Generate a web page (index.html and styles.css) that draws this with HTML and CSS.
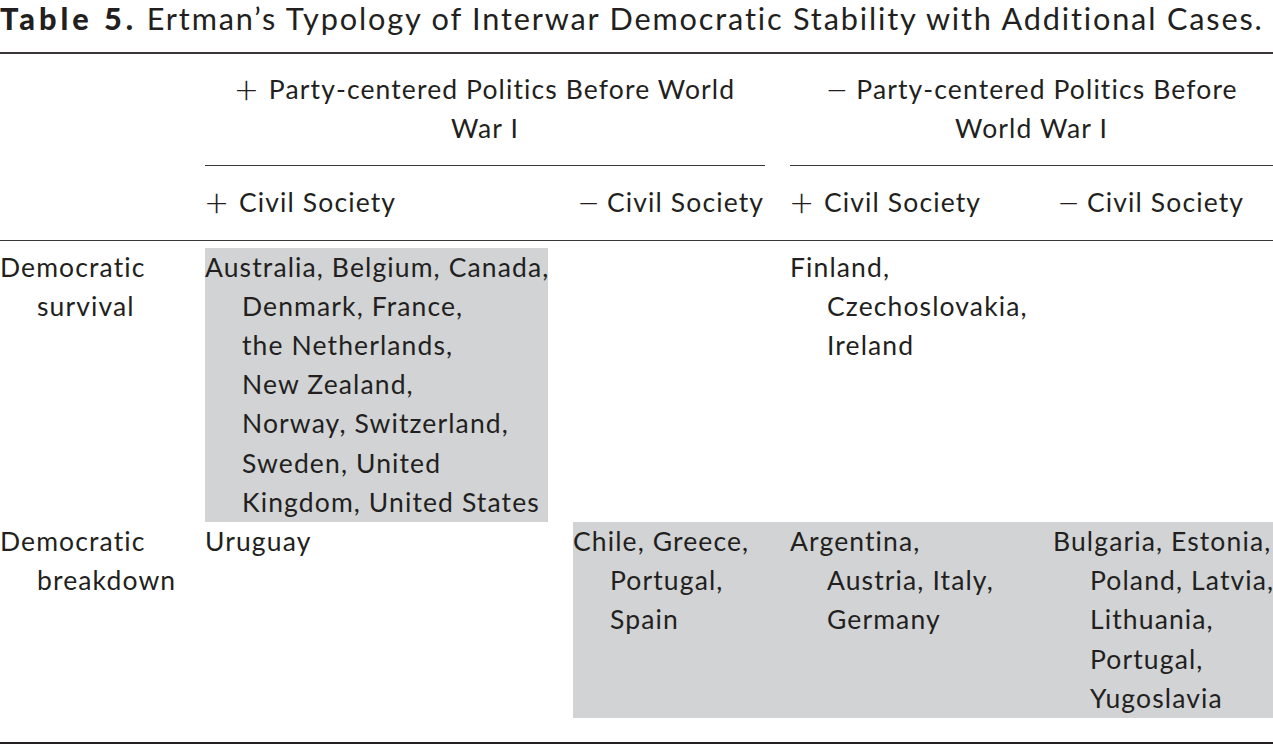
FILE: index.html
```html
<!DOCTYPE html>
<html lang="en">
<head>
<meta charset="utf-8">
<title>Table 5</title>
<link rel="stylesheet" href="styles.css">
</head>
<body>
<div class="page">
  <h1 class="caption"><b>Table 5.</b> Ertman’s Typology of Interwar Democratic Stability with Additional Cases.</h1>
  <div class="rule rule-top"></div>
  <div class="grid head">
    <div class="cell"></div>
    <div class="cell group group-left"><span class="sign">+</span>Party-centered Politics Before World<br>War I</div>
    <div class="cell group group-right"><span class="sign sign-minus">−</span>Party-centered Politics Before<br>World War I</div>
    <div class="cell sub"></div>
    <div class="cell sub"><span class="sign">+</span>Civil Society</div>
    <div class="cell sub"><span class="sign sign-minus sign-inset">−</span>Civil Society</div>
    <div class="cell sub"><span class="sign">+</span>Civil Society</div>
    <div class="cell sub"><span class="sign sign-minus sign-inset">−</span>Civil Society</div>
  </div>
  <div class="rule rule-mid"></div>
  <div class="grid body">
    <div class="cell"><p class="entry">Democratic<br>survival</p></div>
    <div class="cell shade shade-gap"><p class="entry">Australia, Belgium, Canada,<br>Denmark, France,<br>the Netherlands,<br>New Zealand,<br>Norway, Switzerland,<br>Sweden, United<br>Kingdom, United States</p></div>
    <div class="cell"></div>
    <div class="cell"><p class="entry">Finland,<br>Czechoslovakia,<br>Ireland</p></div>
    <div class="cell"></div>

    <div class="cell"><p class="entry">Democratic<br>breakdown</p></div>
    <div class="cell"><p class="entry">Uruguay</p></div>
    <div class="cell shade"><p class="entry">Chile, Greece,<br>Portugal,<br>Spain</p></div>
    <div class="cell shade"><p class="entry">Argentina,<br>Austria, Italy,<br>Germany</p></div>
    <div class="cell shade"><p class="entry">Bulgaria, Estonia,<br>Poland, Latvia,<br>Lithuania,<br>Portugal,<br>Yugoslavia</p></div>
  </div>
  <div class="rule rule-bottom"></div>
</div>
</body>
</html>
```

FILE: styles.css
```css
html, body {
  margin: 0;
  padding: 0;
  background: #ffffff;
}

body {
  font-family: Lato, "Open Sans", "Noto Sans", sans-serif;
  color: #231f20;
}

.page {
  width: 1273px;
}

.caption {
  margin: 0;
  font-size: 30.7px;
  line-height: 37px;
  font-weight: 400;
  letter-spacing: 1.82px;
  white-space: nowrap;
}

.caption b {
  font-weight: 900;
  letter-spacing: 4px;
}

.rule {
  background: #3a3637;
}

.rule-top {
  height: 1.5px;
  margin-top: 15px;
}

.rule-mid {
  height: 1.5px;
}

.rule-bottom {
  height: 2px;
  margin-top: 24px;
  background: #231f20;
}

.grid {
  display: grid;
  grid-template-columns: 205px 368px 217px 263px 220px;
  font-size: 26.5px;
  line-height: 39.2px;
  letter-spacing: 1.12px;
}

.group {
  text-align: center;
  padding: 16.5px 0 17px;
  border-bottom: 1.5px solid #3a3637;
}

.group-left {
  grid-column: 2 / 4;
  margin-right: 25px;
}

.group-right {
  grid-column: 4 / 6;
}

.sign {
  display: inline-block;
  width: 34px;
  font-size: 40px;
  font-weight: 300;
  letter-spacing: 0;
  line-height: 0;
  text-align: left;
  vertical-align: -5px;
}

.sign-minus {
  width: 31px;
}

.sign-inset {
  padding-left: 4px;
  width: 30px;
}

.sub {
  padding: 17px 0;
  white-space: nowrap;
}

.body {
  margin-top: 6.5px;
}

.shade {
  background: #d1d3d4;
}

.shade-gap {
  margin-right: 25px;
}

.entry {
  margin: 0;
  padding-left: 37px;
  text-indent: -37px;
  white-space: nowrap;
}
```
